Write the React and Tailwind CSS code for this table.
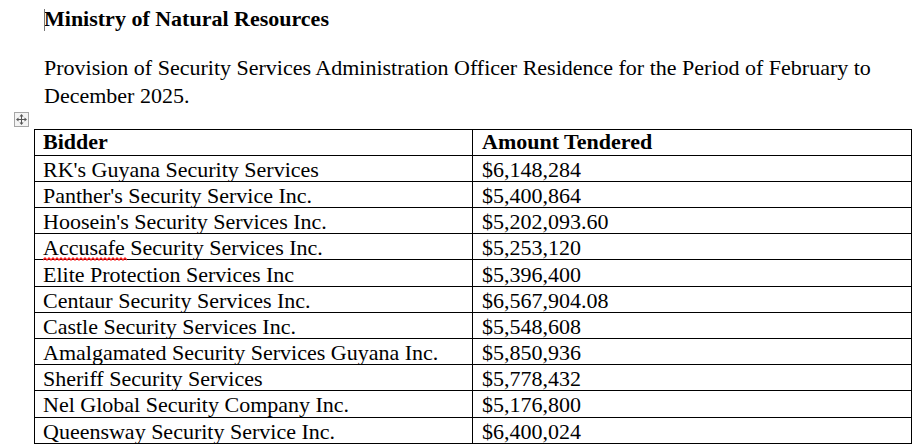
import React from "react";

const rows = [
  ["RK's Guyana Security Services", "$6,148,284"],
  ["Panther's Security Service Inc.", "$5,400,864"],
  ["Hoosein's Security Services Inc.", "$5,202,093.60"],
  ["Accusafe Security Services Inc.", "$5,253,120"],
  ["Elite Protection Services Inc", "$5,396,400"],
  ["Centaur Security Services Inc.", "$6,567,904.08"],
  ["Castle Security Services Inc.", "$5,548,608"],
  ["Amalgamated Security Services Guyana Inc.", "$5,850,936"],
  ["Sheriff Security Services", "$5,778,432"],
  ["Nel Global Security Company Inc.", "$5,176,800"],
  ["Queensway Security Service Inc.", "$6,400,024"],
];

function MoveHandle() {
  return (
    <svg width="15" height="15" viewBox="0 0 15 15" className="block">
      <rect x="0.5" y="0.5" width="14" height="14" fill="#f4f4f4" stroke="#a6a6a6" />
      <g stroke="#555" strokeWidth="1" fill="none">
        <line x1="7.5" y1="3" x2="7.5" y2="12" />
        <line x1="3" y1="7.5" x2="12" y2="7.5" />
      </g>
      <g fill="#555">
        <polygon points="7.5,2 5.5,4.5 9.5,4.5" />
        <polygon points="7.5,13 5.5,10.5 9.5,10.5" />
        <polygon points="2,7.5 4.5,5.5 4.5,9.5" />
        <polygon points="13,7.5 10.5,5.5 10.5,9.5" />
      </g>
    </svg>
  );
}

function Squiggle() {
  let d = "M0 3";
  for (let x = 0; x < 84; x += 4) {
    d += ` L${x + 2} 1 L${x + 4} 3`;
  }
  return (
    <svg width="84" height="4" viewBox="0 0 84 4" className="absolute left-0 top-[22px]">
      <path d={d} fill="none" stroke="#ff1a1a" strokeWidth="1.3" />
    </svg>
  );
}

export default function App() {
  const font = { fontFamily: '"Liberation Serif", "Times New Roman", serif' };
  return (
    <div className="w-[918px] h-[448px] bg-white text-black overflow-hidden relative" style={font}>
      <div className="pl-[44px] pt-[7px]">
        <div className="relative text-[22px] leading-[24.5px] font-bold">
          <span className="absolute left-0 top-[2px] w-px h-[22px] bg-[#777]" />
          Ministry of Natural Resources
        </div>
        <p className="mt-[22.5px] text-[22px] leading-[28px]">
          Provision of Security Services Administration Officer Residence for the Period of February to
          <br />
          December 2025.
        </p>
      </div>
      <div className="pl-[14px] mt-[2px] h-[17px]">
        <MoveHandle />
      </div>
      <div className="ml-[34px] w-[878px]">
        <table className="w-full border-collapse text-[22px]">
          <colgroup>
            <col className="w-[438px]" />
            <col />
          </colgroup>
          <thead>
            <tr className="h-[25.7px]">
              <th className="border border-black text-left font-bold px-[8px] py-0 leading-[24px]">Bidder</th>
              <th className="border border-black text-left font-bold px-[9px] py-0 leading-[24px]">Amount Tendered</th>
            </tr>
          </thead>
          <tbody>
            {rows.map(([name, amt], i) => (
              <tr key={i} className="h-[26.2px]">
                <td className="border border-black px-[8px] pt-[3px] pb-0 leading-[22px] whitespace-nowrap">
                  {name.startsWith("Accusafe") ? (
                    <>
                      <span className="relative">
                        Accusafe
                        <Squiggle />
                      </span>
                      {" Security Services Inc."}
                    </>
                  ) : (
                    name
                  )}
                </td>
                <td className="border border-black px-[9px] pt-[3px] pb-0 leading-[22px]">{amt}</td>
              </tr>
            ))}
          </tbody>
        </table>
      </div>
    </div>
  );
}
